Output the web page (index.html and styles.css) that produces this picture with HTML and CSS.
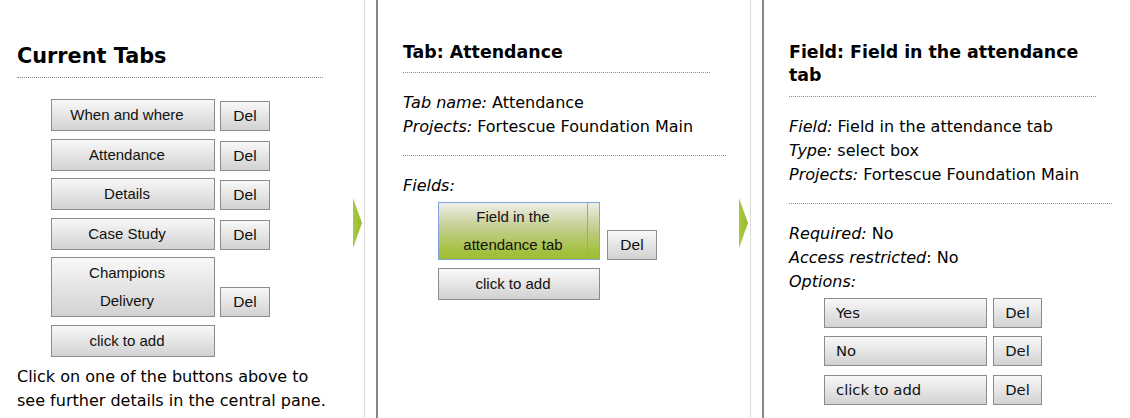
FILE: index.html
```html
<!DOCTYPE html>
<html lang="en">
<head>
<meta charset="utf-8">
<title>Tabs editor</title>
<link rel="stylesheet" href="styles.css">
</head>
<body>
<div class="panes">
  <section class="pane pane-first">
    <h2 class="pane-title-lg">Current Tabs</h2>
    <div class="btn-list tabs">
      <div class="btn-row"><button class="btn-main">When and where</button><button class="btn-del">Del</button></div>
      <div class="btn-row"><button class="btn-main">Attendance</button><button class="btn-del">Del</button></div>
      <div class="btn-row"><button class="btn-main">Details</button><button class="btn-del">Del</button></div>
      <div class="btn-row"><button class="btn-main">Case Study</button><button class="btn-del">Del</button></div>
      <div class="btn-row"><button class="btn-main">Champions Delivery</button><button class="btn-del">Del</button></div>
      <div class="btn-row"><button class="btn-main">click to add</button></div>
    </div>
    <p class="hint">Click on one of the buttons above to see further details in the central pane.</p>
    <svg class="pane-arrow" width="9" height="50" viewBox="0 0 9 50"><defs><linearGradient id="ga" x1="0" y1="0" x2="1" y2="0"><stop offset="0" stop-color="#a8c83f"/><stop offset="1" stop-color="#98bb32"/></linearGradient></defs><polygon points="0,0 9,25 0,50" fill="url(#ga)"/></svg>
  </section>

  <section class="pane">
    <h3 class="pane-title">Tab: Attendance</h3>
    <p class="info"><em>Tab name:</em> Attendance<br><em>Projects:</em> Fortescue Foundation Main</p>
    <hr class="sep">
    <p class="info"><em>Fields:</em></p>
    <div class="btn-list fields">
      <div class="btn-row wide-gap"><button class="btn-main narrow active">Field in the attendance tab</button><button class="btn-del">Del</button></div>
      <div class="btn-row"><button class="btn-main narrow">click to add</button></div>
    </div>
    <svg class="pane-arrow" width="9" height="50" viewBox="0 0 9 50"><defs><linearGradient id="gb" x1="0" y1="0" x2="1" y2="0"><stop offset="0" stop-color="#a8c83f"/><stop offset="1" stop-color="#98bb32"/></linearGradient></defs><polygon points="0,0 9,25 0,50" fill="url(#gb)"/></svg>
  </section>

  <section class="pane pane-last">
    <h3 class="pane-title">Field: Field in the attendance tab</h3>
    <p class="info"><em>Field:</em> Field in the attendance tab<br><em>Type:</em> select box<br><em>Projects:</em> Fortescue Foundation Main</p>
    <hr class="sep">
    <p class="info"><em>Required:</em> No<br><em>Access restricted</em>: No<br><em>Options:</em></p>
    <div class="btn-list options">
      <div class="opt-row"><button class="btn-opt">Yes</button><button class="btn-opt-del">Del</button></div>
      <div class="opt-row"><button class="btn-opt">No</button><button class="btn-opt-del">Del</button></div>
      <div class="opt-row"><button class="btn-opt">click to add</button><button class="btn-opt-del">Del</button></div>
    </div>
    <p class="info tail">Add, edit or delete the options of this field here.</p>
  </section>
</div>
</body>
</html>
```

FILE: styles.css
```css
html, body {
  margin: 0;
  padding: 0;
  background: #fff;
  overflow: hidden;
}

body {
  font-family: "DejaVu Sans", Verdana, sans-serif;
  font-size: 16px;
  line-height: 24px;
  color: #000;
}

.panes {
  display: flex;
  align-items: stretch;
  min-height: 418px;
}

.pane {
  position: relative;
  flex: none;
  width: 323px;
  padding: 0 24px 0 25px;
  margin-left: 11px;
  border-left: 2px solid #868686;
  border-right: 1px solid #dcdcdc;
}

.pane-first {
  margin-left: 0;
  padding-left: 17px;
  border-left: 0;
}

.pane-last {
  border-right: 0;
}

.pane-title-lg {
  margin: 42px 0 0;
  width: 306px;
  font-size: 20.8px;
  line-height: 28px;
  font-weight: bold;
  padding-bottom: 7px;
  border-bottom: 1px dotted #8a8a8a;
}

.pane-title {
  margin: 40.5px 0 0;
  width: 307px;
  font-size: 17.4px;
  line-height: 23.5px;
  font-weight: bold;
  padding-bottom: 8px;
  border-bottom: 1px dotted #8a8a8a;
}

.info {
  margin: 18px 0 0;
}

.info em {
  font-style: italic;
}

.sep {
  margin: 16px 0 0;
  border: 0;
  border-top: 1px dotted #8a8a8a;
  height: 0;
}

.btn-list.tabs {
  margin: 21px 0 0 34px;
}

.btn-list.fields {
  margin: 4px 0 0 35px;
}

.btn-list.options {
  margin: 4px 0 0 35px;
}

.btn-row {
  display: flex;
  align-items: flex-end;
  gap: 5px;
  margin-bottom: 7.5px;
}

.btn-row.wide-gap {
  gap: 7px;
}

.btn-main,
.btn-del,
.btn-opt,
.btn-opt-del {
  margin: 0;
  box-sizing: border-box;
  border: 1px solid #8c8c8c;
  border-radius: 0;
  background: linear-gradient(#f8f8f8, #d2d2d2);
  color: #111;
  cursor: pointer;
}

.btn-main {
  width: 164px;
  padding: 1px 22px 1px 10px;
  font-family: "Liberation Sans", Arial, sans-serif;
  font-size: 15px;
  line-height: 28px;
  text-align: center;
}

.btn-main.narrow {
  width: 162px;
}

.btn-main.active {
  padding-top: 0;
  padding-bottom: 0;
  border-color: #7fa6da;
  background:
    linear-gradient(to left, transparent 11px, #7fa6da 11px, #7fa6da 12px, transparent 12px),
    linear-gradient(#eeeee8, #c3cd8c 45%, #a3c13d 88%, #9dbd34);
}

.btn-del {
  width: 50px;
  height: 30px;
  padding: 0;
  font-family: "Liberation Sans", Arial, sans-serif;
  font-size: 15.5px;
  line-height: 28px;
  text-align: center;
}

.opt-row {
  display: flex;
  gap: 6px;
  margin-bottom: 8.5px;
}

.btn-opt {
  width: 163px;
  height: 30px;
  padding: 0 0 0 11px;
  font-family: "DejaVu Sans", Verdana, sans-serif;
  font-size: 14.8px;
  line-height: 28px;
  text-align: left;
}

.btn-opt-del {
  width: 49px;
  height: 30px;
  padding: 0;
  font-family: "DejaVu Sans", Verdana, sans-serif;
  font-size: 14.8px;
  line-height: 28px;
  text-align: center;
}

.hint {
  margin: 8.5px 0 0;
  max-width: 312px;
}

.tail {
  margin-top: 3.5px;
}

.pane-arrow {
  position: absolute;
  top: 198px;
  right: 2px;
  display: block;
}
```
